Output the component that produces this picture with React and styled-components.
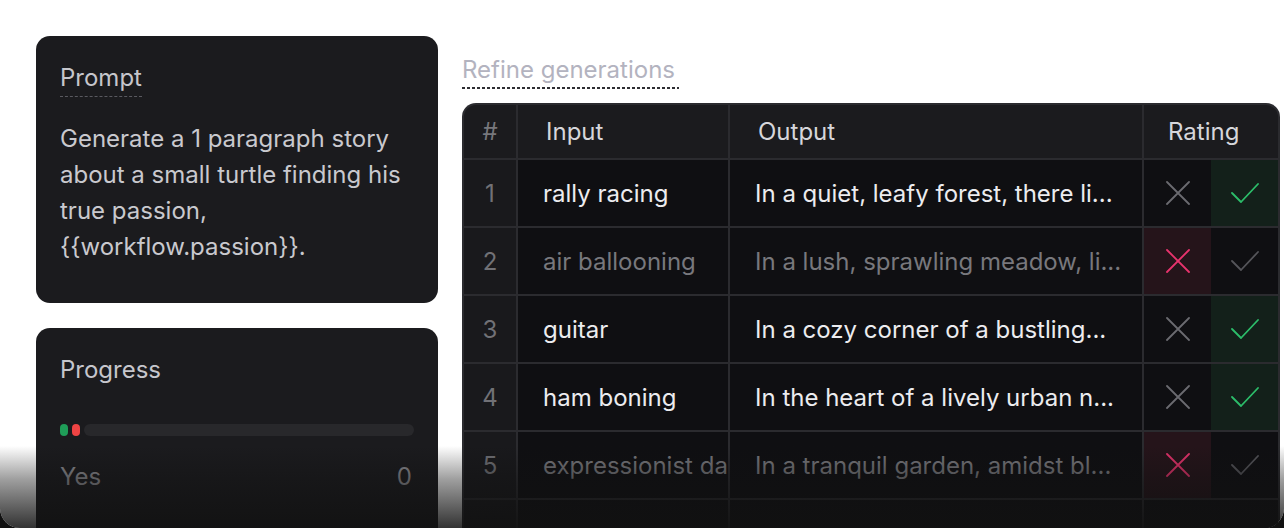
import React from "react";
import styled, { createGlobalStyle } from "styled-components";

const Global = createGlobalStyle`
  html, body {
    margin: 0;
    padding: 0;
    background: #111111;
  }
  body {
    font-family: Inter, "Noto Sans", sans-serif;
    -webkit-font-smoothing: antialiased;
  }
`;

const rows = [
  { n: 1, input: "rally racing", output: "In a quiet, leafy forest, there li...", rate: "yes" },
  { n: 2, input: "air ballooning", output: "In a lush, sprawling meadow, li...", rate: "no" },
  { n: 3, input: "guitar", output: "In a cozy corner of a bustling...", rate: "yes" },
  { n: 4, input: "ham boning", output: "In the heart of a lively urban n...", rate: "yes" },
  { n: 5, input: "expressionist dance", output: "In a tranquil garden, amidst bl...", rate: "no" },
  { n: 6, input: "", output: "", rate: "none" },
];

const XIcon = ({ color }) => (
  <svg width="24" height="24" viewBox="0 0 24 24" fill="none">
    <path d="M1 1 L23 23 M23 1 L1 23" stroke={color} strokeWidth="1.8" strokeLinecap="round" />
  </svg>
);

const CheckIcon = ({ color }) => (
  <svg width="28" height="20" viewBox="0 0 28 20" fill="none">
    <path d="M1 10 L10 19 L27 1" stroke={color} strokeWidth="1.8" strokeLinecap="round" strokeLinejoin="round" />
  </svg>
);

const App = () => {
  return (
    <>
      <Global />
      <Page>
        <LeftCol>
          <Card $h={267}>
            <CardTitle>Prompt</CardTitle>
            <PromptText>
              Generate a 1 paragraph story about a small turtle finding his true passion,
              {" {{workflow.passion}}."}
            </PromptText>
          </Card>
          <Card $h={260}>
            <PlainTitle>Progress</PlainTitle>
            <Bar>
              <Dot $c="#1f9d58" />
              <Dot $c="#ef4444" />
              <Track />
            </Bar>
            <StatRow>
              <span>Yes</span>
              <span>0</span>
            </StatRow>
          </Card>
        </LeftCol>

        <RightCol>
          <Heading>Refine generations</Heading>
          <Table>
            <Head $first $center>#</Head>
            <Head $pad={28}>Input</Head>
            <Head $pad={28}>Output</Head>
            <Head $last $pad={24}>Rating</Head>
            {rows.map((r) => {
              const dim = r.rate !== "yes";
              return (
                <React.Fragment key={r.n}>
                  <NumCell>{r.rate !== "none" ? r.n : ""}</NumCell>
                  <TextCell $dim={dim}>{r.input}</TextCell>
                  <TextCell $dim={dim}>{r.output}</TextCell>
                  <RateCell>
                    <RateBox $tone={r.rate === "no" ? "red" : "off"}>
                      {r.rate !== "none" && (
                        <XIcon color={r.rate === "no" ? "#e8336d" : "#6b6b70"} />
                      )}
                    </RateBox>
                    <RateBox $tone={r.rate === "yes" ? "green" : "off"}>
                      {r.rate !== "none" && (
                        <CheckIcon color={r.rate === "yes" ? "#2cbd6a" : "#55555a"} />
                      )}
                    </RateBox>
                  </RateCell>
                </React.Fragment>
              );
            })}
          </Table>
        </RightCol>
        <Fade />
      </Page>
    </>
  );
};

const Page = styled.div`
  position: relative;
  width: 1284px;
  height: 528px;
  overflow: hidden;
  background: #ffffff;
  border-radius: 0 0 20px 20px;
  display: flex;
  align-items: flex-start;
  gap: 24px;
  padding: 36px 0 0 36px;
  box-sizing: border-box;
`;

const LeftCol = styled.div`
  width: 402px;
  display: flex;
  flex-direction: column;
  gap: 25px;
  flex-shrink: 0;
`;

const Card = styled.div`
  background: #1b1b1e;
  border-radius: 14px;
  height: ${(p) => p.$h}px;
  box-sizing: border-box;
  padding: 27px 24px 0 24px;
  display: flex;
  flex-direction: column;
  align-items: flex-start;
`;

const CardTitle = styled.div`
  font-size: 24px;
  line-height: 30px;
  color: #c6c6cc;
  padding-bottom: 3px;
  border-bottom: 1px dashed #5a5a60;
`;

const PlainTitle = styled.div`
  font-size: 24px;
  line-height: 30px;
  color: #c6c6cc;
`;

const PromptText = styled.p`
  margin: 24px 0 0 0;
  font-size: 24px;
  line-height: 36px;
  color: #c9c9ce;
`;

const Bar = styled.div`
  margin-top: 39px;
  width: 100%;
  height: 12px;
  display: flex;
  gap: 4px;
`;

const Dot = styled.div`
  width: 8px;
  height: 12px;
  border-radius: 4px;
  background: ${(p) => p.$c};
`;

const Track = styled.div`
  flex: 1;
  height: 12px;
  border-radius: 6px;
  background: #28282b;
`;

const StatRow = styled.div`
  margin-top: 26px;
  width: 100%;
  display: flex;
  justify-content: space-between;
  font-size: 24px;
  line-height: 30px;
  color: #8e8e93;
  span:last-child {
    padding-right: 2px;
  }
`;

const RightCol = styled.div`
  width: 818px;
  margin-top: 19px;
  display: flex;
  flex-direction: column;
  align-items: flex-start;
  flex-shrink: 0;
`;

const Heading = styled.div`
  font-size: 24px;
  line-height: 30px;
  color: #b3b3bf;
  padding-right: 4px;
  padding-bottom: 4px;
  background: linear-gradient(to right, #2e2e33 55%, transparent 55%) left bottom / 5px 2px repeat-x;
`;

const Table = styled.div`
  margin-top: 14px;
  width: 818px;
  box-sizing: border-box;
  background: #2b2b2f;
  border-radius: 14px 14px 0 0;
  padding: 2px;
  display: grid;
  grid-template-columns: 52px 210px 412px 134px;
  grid-auto-rows: 66px;
  grid-template-rows: 53px;
  gap: 2px;
`;

const Head = styled.div`
  background: #1b1b1e;
  display: flex;
  align-items: center;
  justify-content: ${(p) => (p.$center ? "center" : "flex-start")};
  padding-left: ${(p) => p.$pad || 0}px;
  font-size: 24px;
  line-height: 30px;
  color: ${(p) => (p.$center ? "#77777c" : "#d6d6db")};
  border-top-left-radius: ${(p) => (p.$first ? "12px" : "0")};
  border-top-right-radius: ${(p) => (p.$last ? "12px" : "0")};
`;

const NumCell = styled.div`
  background: #19191c;
  display: flex;
  align-items: center;
  justify-content: center;
  padding-top: 1px;
  font-size: 24px;
  line-height: 30px;
  color: #717176;
`;

const TextCell = styled.div`
  background: #0f0f12;
  display: flex;
  align-items: center;
  padding: 1px 0 0 25px;
  overflow: hidden;
  white-space: nowrap;
  font-size: 24px;
  line-height: 30px;
  color: ${(p) => (p.$dim ? "#78787d" : "#ececef")};
`;

const RateCell = styled.div`
  display: flex;
  background: #0f0f12;
`;

const tones = {
  red: "#25141a",
  green: "#13201a",
  off: "#0f0f12",
};

const RateBox = styled.div`
  flex: 1;
  display: flex;
  align-items: center;
  justify-content: center;
  background: ${(p) => tones[p.$tone]};
`;

const Fade = styled.div`
  position: absolute;
  left: 0;
  right: 0;
  bottom: 0;
  height: 82px;
  pointer-events: none;
  background: linear-gradient(to bottom, rgba(17, 17, 17, 0) 0%, rgba(17, 17, 17, 0.4) 40%, rgba(17, 17, 17, 0.86) 100%);
`;

export default App;
